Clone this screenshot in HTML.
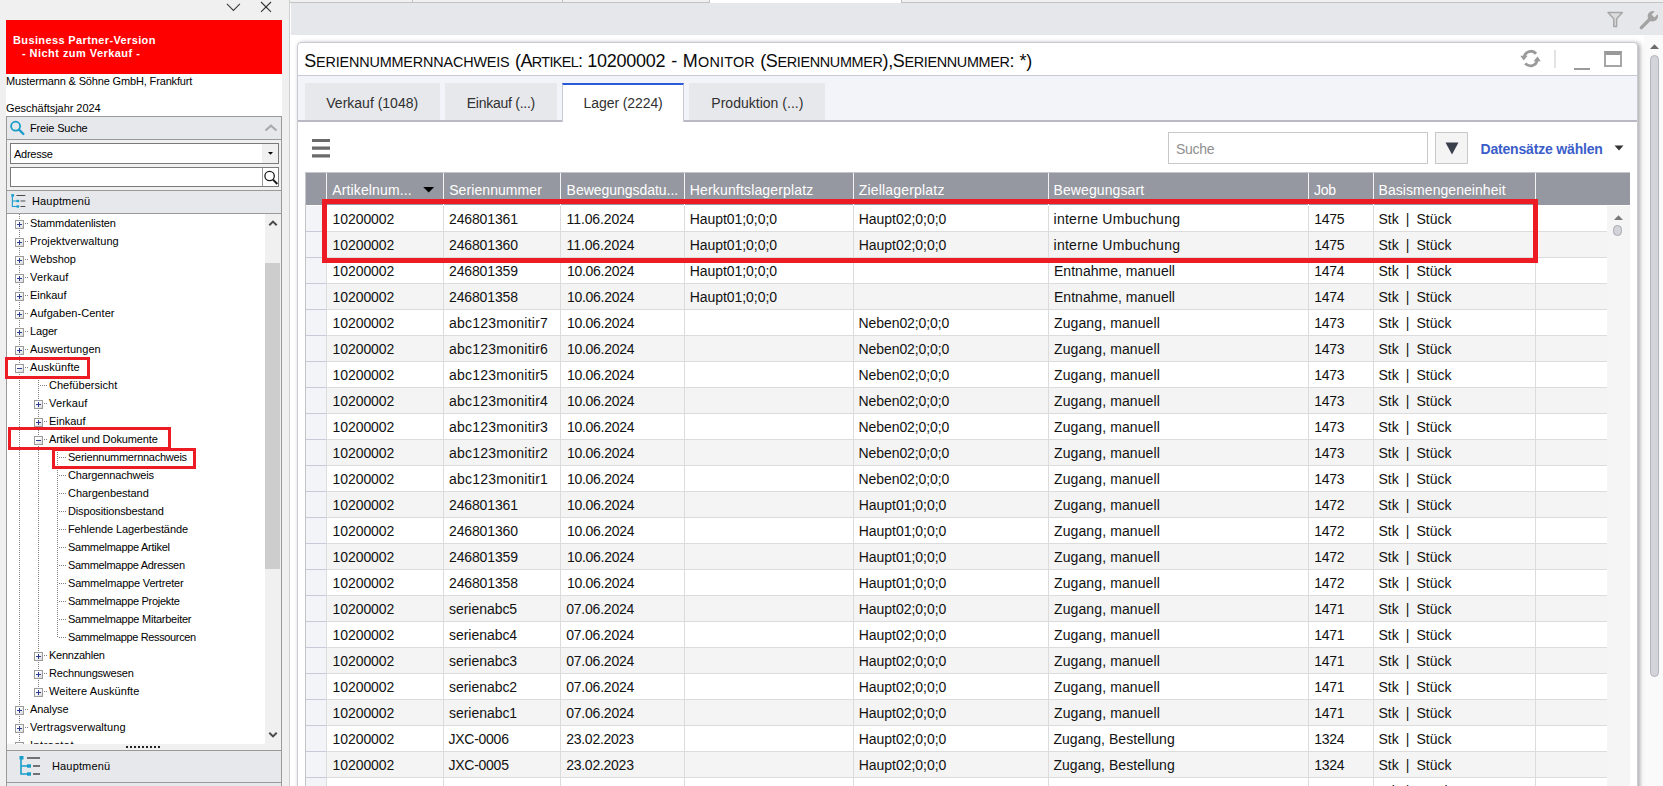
<!DOCTYPE html>
<html lang="de"><head><meta charset="utf-8"><title>Seriennummernnachweis</title>
<style>
*{box-sizing:border-box;margin:0;padding:0}
html,body{width:1663px;height:786px;overflow:hidden;background:#f0f0f0}
body{position:relative;font-family:"Liberation Sans",sans-serif;font-size:11px;color:#000}
.a{position:absolute}
.t{position:absolute;white-space:pre;line-height:18px;height:18px}
#lp{left:0;top:0;width:289px;height:786px;background:#f0f0f0}
#redbox{left:6px;top:20px;width:276px;height:54px;background:#ff0000;color:#fff}
#info{left:6px;top:74px;width:276px;height:42px;background:#fff}
.hdr{left:6px;width:276px;background:#e7e8ec;border:1px solid #9a9a9a}
#tree{left:7px;top:214px;width:258px;height:530px;background:#fff;overflow:hidden}
.bx{position:absolute;width:9px;height:9px;border:1px solid #9b9b9b;background:linear-gradient(135deg,#fff 30%,#d8d8d8)}
.bx:before{content:"";position:absolute;left:1px;top:3px;width:5px;height:1px;background:#2b3b8f}
.bx.p:after{content:"";position:absolute;left:3px;top:1px;width:1px;height:5px;background:#2b3b8f}
.vd{position:absolute;width:1px;background-image:linear-gradient(#808080 50%,transparent 50%);background-size:1px 2px}
.hd{position:absolute;height:1px;background-image:linear-gradient(90deg,#808080 50%,transparent 50%);background-size:2px 1px}
.rb{position:absolute;border:3px solid #ed1c24}
#rp{left:290px;top:0;width:1373px;height:786px;background:#fff}
#strip{left:1px;top:3px;width:1372px;height:32px;background:#e6e7ea}
#panel{left:7px;top:42px;width:1341px;height:760px;background:#fff;border:1px solid #c9cad3;border-radius:4px;box-shadow:2px 1px 5px rgba(0,0,0,.35)}
#title{left:0;top:0;width:1339px;height:33px;color:#0a0a0a}
#title .t{font-size:18px;line-height:34px;height:34px;top:1px}
#title .sc{font-size:14.4px}
#tabs{left:0;top:32px;width:1339px;height:47px;background:#f3f4f9;border-top:1px solid #c9cad3;border-bottom:2px solid #b9bac4}
.tab{position:absolute;top:7px;height:37px;background:#e7e8ec}
.tab.act{background:#fff;border-top:2px solid #2a5bd7;border-left:1px solid #c9cad3;border-right:1px solid #c9cad3;height:39px}
.tab .t{font-size:14px;color:#303030}
#grid{top:129px;width:1325px;height:700px}
.gh{position:absolute;top:1px;height:32px;border-left:1px solid #f4f4f6}
.gh .t,.c .t{font-size:14px}
.gh .t{color:#fff;top:8px}
.row{position:absolute;left:1px;height:26px;border-bottom:1px solid #dcdcdc;background:#fff}
.row.o{background:#f4f4f4}
.ri{position:absolute;left:0;top:0;width:20px;height:26px;background:#f3f4f7;border-bottom:1px solid #c9cad8}
.c{position:absolute;top:0;height:25px;border-left:1px solid #dcdcdc;color:#111}
.c .t{top:4px}
</style></head>
<body>
<div id="lp" class="a">
<svg class="a" style="left:224px;top:0" width="52" height="16" viewBox="0 0 52 16"><path d="M2.9 3.9 L9.4 10.4 L15.9 3.9" fill="none" stroke="#3c3c3c" stroke-width="1.1"/><path d="M37 2 L47 11.9 M47 2 L37 11.9" fill="none" stroke="#333" stroke-width="1.1"/></svg>
<div id="redbox" class="a"><div class="t" style="left:7px;top:11px;font-weight:700;letter-spacing:0.37px;">Business Partner-Version</div><div class="t" style="left:16px;top:24px;font-weight:700;letter-spacing:0.45px;">- Nicht zum Verkauf -</div></div>
<div id="info" class="a"><div class="t" style="left:0px;top:-2px;letter-spacing:-0.15px;">Mustermann &amp; Söhne GmbH, Frankfurt</div><div class="t" style="left:0px;top:25px;letter-spacing:-0.04px;">Geschäftsjahr 2024</div></div>
<div class="a hdr" style="top:116px;height:24px"><svg class="a" style="left:3px;top:3px" width="16" height="16" viewBox="0 0 16 16"><circle cx="5.6" cy="6.2" r="4.5" fill="none" stroke="#189dca" stroke-width="1.8"/><path d="M9 9.6 L13.4 14" stroke="#189dca" stroke-width="2.3" stroke-linecap="round"/></svg><div class="t" style="left:23px;top:2px;letter-spacing:-0.16px;">Freie Suche</div><svg class="a" style="left:257px;top:6px" width="14" height="10" viewBox="0 0 14 10"><path d="M1.5 7.5 L7 2.6 L12.5 7.5" fill="none" stroke="#a9a9a9" stroke-width="2.1"/></svg></div>
<div class="a" style="left:6px;top:140px;width:276px;height:51px;border-left:1px solid #9a9a9a;border-right:1px solid #9a9a9a;background:#f0f0f0"></div>
<div class="a" style="left:10px;top:143px;width:269px;height:21px;background:#fff;border:1px solid #7a7a7a"><div class="t" style="left:3px;top:1px;letter-spacing:-0.25px;">Adresse</div><div class="a" style="right:0;top:0;width:16px;height:19px;background:#f0f0f0"></div><svg class="a" style="left:256px;top:7px" width="7" height="5" viewBox="0 0 7 5"><path d="M1 1 H6 L3.5 3.8 Z" fill="#000"/></svg></div>
<div class="a" style="left:10px;top:167px;width:269px;height:20px;background:#fff;border:1px solid #7a7a7a"><div class="a" style="left:251px;top:0;width:1px;height:18px;background:#9a9a9a"></div><svg class="a" style="left:252px;top:1px" width="16" height="17" viewBox="0 0 16 17"><circle cx="6.6" cy="7" r="4.7" fill="none" stroke="#1a1a1a" stroke-width="1.3"/><path d="M10 10.6 L14.3 15" stroke="#1a1a1a" stroke-width="2"/></svg></div>
<div class="a hdr" style="top:190px;height:24px"><svg class="a" style="left:4px;top:3px" width="15" height="14" viewBox="0 0 22 20"><path d="M2 1 V18 H10 M2 10 H10" fill="none" stroke="#189dca" stroke-width="1.6"/><rect x="0.5" y="0" width="4" height="3.5" fill="#189dca"/><rect x="8" y="8.3" width="4" height="3.4" fill="#189dca"/><rect x="8" y="16.3" width="4" height="3.4" fill="#189dca"/><path d="M8 2 H21 M14 10 H21 M14 18 H21" stroke="#4a4a4a" stroke-width="1.6"/></svg><div class="t" style="left:25px;top:1px;letter-spacing:0.15px;">Hauptmenü</div></div>
<div class="a" style="left:6px;top:214px;width:276px;height:537px;border-left:1px solid #9a9a9a;border-right:1px solid #9a9a9a"></div>
<div id="tree" class="a">
<div class="vd" style="left:12px;top:0;height:540px"></div><div class="vd" style="left:31px;top:162px;height:315px"></div><div class="vd" style="left:50px;top:234px;height:189px"></div>
<div class="hd" style="left:18px;top:9px;width:4px"></div><div class="bx p" style="left:8px;top:6px"></div><div class="t" style="left:23px;top:0px;letter-spacing:-0.14px;">Stammdatenlisten</div>
<div class="hd" style="left:18px;top:27px;width:4px"></div><div class="bx p" style="left:8px;top:24px"></div><div class="t" style="left:23px;top:18px;letter-spacing:0.08px;">Projektverwaltung</div>
<div class="hd" style="left:18px;top:45px;width:4px"></div><div class="bx p" style="left:8px;top:42px"></div><div class="t" style="left:23px;top:36px;letter-spacing:-0.07px;">Webshop</div>
<div class="hd" style="left:18px;top:63px;width:4px"></div><div class="bx p" style="left:8px;top:60px"></div><div class="t" style="left:23px;top:54px;letter-spacing:0.18px;">Verkauf</div>
<div class="hd" style="left:18px;top:81px;width:4px"></div><div class="bx p" style="left:8px;top:78px"></div><div class="t" style="left:23px;top:72px;letter-spacing:-0.03px;">Einkauf</div>
<div class="hd" style="left:18px;top:99px;width:4px"></div><div class="bx p" style="left:8px;top:96px"></div><div class="t" style="left:23px;top:90px;letter-spacing:0.05px;">Aufgaben-Center</div>
<div class="hd" style="left:18px;top:117px;width:4px"></div><div class="bx p" style="left:8px;top:114px"></div><div class="t" style="left:23px;top:108px;letter-spacing:-0.15px;">Lager</div>
<div class="hd" style="left:18px;top:135px;width:4px"></div><div class="bx p" style="left:8px;top:132px"></div><div class="t" style="left:23px;top:126px;letter-spacing:0.03px;">Auswertungen</div>
<div class="hd" style="left:18px;top:153px;width:4px"></div><div class="bx m" style="left:8px;top:150px"></div><div class="t" style="left:23px;top:144px;letter-spacing:0.09px;">Auskünfte</div>
<div class="hd" style="left:33px;top:171px;width:8px"></div><div class="t" style="left:42px;top:162px;letter-spacing:0.03px;">Chefübersicht</div>
<div class="hd" style="left:37px;top:189px;width:4px"></div><div class="bx p" style="left:27px;top:186px"></div><div class="t" style="left:42px;top:180px;letter-spacing:0.18px;">Verkauf</div>
<div class="hd" style="left:37px;top:207px;width:4px"></div><div class="bx p" style="left:27px;top:204px"></div><div class="t" style="left:42px;top:198px;letter-spacing:-0.04px;">Einkauf</div>
<div class="hd" style="left:37px;top:225px;width:4px"></div><div class="bx m" style="left:27px;top:222px"></div><div class="t" style="left:42px;top:216px;letter-spacing:-0.12px;">Artikel und Dokumente</div>
<div class="hd" style="left:52px;top:243px;width:8px"></div><div class="t" style="left:61px;top:234px;letter-spacing:-0.25px;">Seriennummernnachweis</div>
<div class="hd" style="left:52px;top:261px;width:8px"></div><div class="t" style="left:61px;top:252px;letter-spacing:-0.14px;">Chargennachweis</div>
<div class="hd" style="left:52px;top:279px;width:8px"></div><div class="t" style="left:61px;top:270px;letter-spacing:-0.04px;">Chargenbestand</div>
<div class="hd" style="left:52px;top:297px;width:8px"></div><div class="t" style="left:61px;top:288px;letter-spacing:-0.15px;">Dispositionsbestand</div>
<div class="hd" style="left:52px;top:315px;width:8px"></div><div class="t" style="left:61px;top:306px;letter-spacing:-0.11px;">Fehlende Lagerbestände</div>
<div class="hd" style="left:52px;top:333px;width:8px"></div><div class="t" style="left:61px;top:324px;letter-spacing:-0.28px;">Sammelmappe Artikel</div>
<div class="hd" style="left:52px;top:351px;width:8px"></div><div class="t" style="left:61px;top:342px;letter-spacing:-0.31px;">Sammelmappe Adressen</div>
<div class="hd" style="left:52px;top:369px;width:8px"></div><div class="t" style="left:61px;top:360px;letter-spacing:-0.18px;">Sammelmappe Vertreter</div>
<div class="hd" style="left:52px;top:387px;width:8px"></div><div class="t" style="left:61px;top:378px;letter-spacing:-0.29px;">Sammelmappe Projekte</div>
<div class="hd" style="left:52px;top:405px;width:8px"></div><div class="t" style="left:61px;top:396px;letter-spacing:-0.25px;">Sammelmappe Mitarbeiter</div>
<div class="hd" style="left:52px;top:423px;width:8px"></div><div class="t" style="left:61px;top:414px;letter-spacing:-0.36px;">Sammelmappe Ressourcen</div>
<div class="hd" style="left:37px;top:441px;width:4px"></div><div class="bx p" style="left:27px;top:438px"></div><div class="t" style="left:42px;top:432px;letter-spacing:-0.24px;">Kennzahlen</div>
<div class="hd" style="left:37px;top:459px;width:4px"></div><div class="bx p" style="left:27px;top:456px"></div><div class="t" style="left:42px;top:450px;letter-spacing:-0.2px;">Rechnungswesen</div>
<div class="hd" style="left:37px;top:477px;width:4px"></div><div class="bx p" style="left:27px;top:474px"></div><div class="t" style="left:42px;top:468px;letter-spacing:0.08px;">Weitere Auskünfte</div>
<div class="hd" style="left:18px;top:495px;width:4px"></div><div class="bx p" style="left:8px;top:492px"></div><div class="t" style="left:23px;top:486px;letter-spacing:-0.08px;">Analyse</div>
<div class="hd" style="left:18px;top:513px;width:4px"></div><div class="bx p" style="left:8px;top:510px"></div><div class="t" style="left:23px;top:504px;letter-spacing:0.08px;">Vertragsverwaltung</div>
<div class="hd" style="left:18px;top:531px;width:4px"></div><div class="bx p" style="left:8px;top:528px"></div><div class="t" style="left:23px;top:522px;letter-spacing:0.47px;">Intrastat</div>
</div>
<div class="rb" style="left:5px;top:357px;width:85px;height:22px"></div><div class="rb" style="left:8px;top:427px;width:163px;height:23px"></div><div class="rb" style="left:52px;top:448px;width:144px;height:21px"></div>
<div class="a" style="left:265px;top:214px;width:16px;height:530px;background:#f0f0f0"><svg class="a" style="left:3px;top:5px" width="10" height="8" viewBox="0 0 10 8"><path d="M1.3 6.2 L5 2.6 L8.7 6.2" fill="none" stroke="#4a4a4a" stroke-width="2"/></svg><div class="a" style="left:0;top:49px;width:15px;height:306px;background:#cdcdcd"></div><svg class="a" style="left:3px;top:517px" width="10" height="8" viewBox="0 0 10 8"><path d="M1.3 1.8 L5 5.4 L8.7 1.8" fill="none" stroke="#4a4a4a" stroke-width="2"/></svg></div>
<div class="a" style="left:7px;top:744px;width:274px;height:6px;background:#f0f0f0"></div><div class="a" style="left:126px;top:746px;width:34px;height:2px;background-image:linear-gradient(90deg,#222 50%,transparent 50%);background-size:4px 2px"></div>
<div class="a hdr" style="top:750px;height:33px"><svg class="a" style="left:12px;top:5px" width="22" height="20" viewBox="0 0 22 20"><path d="M2 1 V18 H10 M2 10 H10" fill="none" stroke="#189dca" stroke-width="1.6"/><rect x="0.5" y="0" width="4" height="3.5" fill="#189dca"/><rect x="8" y="8.3" width="4" height="3.4" fill="#189dca"/><rect x="8" y="16.3" width="4" height="3.4" fill="#189dca"/><path d="M8 2 H21 M14 10 H21 M14 18 H21" stroke="#4a4a4a" stroke-width="1.6"/></svg><div class="t" style="left:45px;top:6px;letter-spacing:0.15px;">Hauptmenü</div></div>
<div class="a hdr" style="top:782px;height:10px"></div>
</div>
<div class="a" style="left:289px;top:0;width:1px;height:786px;background:#cfcfcf"></div>
<div id="rp" class="a">
<div class="a" style="left:0;top:0;width:1373px;height:3px;background:#f0f0f0;border-bottom:1px solid #c3c3c3"></div><div class="a" style="left:122px;top:0;width:1px;height:3px;background:#c3c3c3"></div><div class="a" style="left:272px;top:0;width:1px;height:3px;background:#c3c3c3"></div><div class="a" style="left:419px;top:0;width:1px;height:3px;background:#c3c3c3"></div><div class="a" style="left:420px;top:0;width:191px;height:3px;background:#fff"></div><div class="a" style="left:611px;top:0;width:1px;height:3px;background:#c3c3c3"></div>
<div id="strip" class="a"><svg class="a" style="left:1315px;top:5px" width="19" height="20" viewBox="0 0 19 20"><path d="M2 4.6 H16.4 L10.6 10.8 V18.4 H7.8 V10.8 Z" fill="#dcdcdf" stroke="#a6a6a6" stroke-width="1.5" stroke-linejoin="round"/></svg><svg class="a" style="left:1348px;top:7px" width="20" height="20" viewBox="0 0 20 20"><path d="M2.4 17.6 L11 9" stroke="#a3a3a3" stroke-width="3.4" stroke-linecap="round"/><path d="M18.6 4.2 L15.4 7.4 L12.6 4.6 L15.8 1.4 A5.2 5.2 0 1 0 18.6 4.2 Z" fill="#a3a3a3"/></svg></div>
<div class="a" style="left:1354px;top:35px;width:19px;height:751px;background:#fafafa"><svg class="a" style="left:6px;top:9px" width="9" height="5" viewBox="0 0 9 5"><path d="M0 5 L4.5 0.3 L9 5 Z" fill="#6c6c6c"/></svg><div class="a" style="left:6px;top:20px;width:9px;height:622px;background:#d3d3da;border:1px solid #b4b4bc;border-radius:5px"></div></div>
<div id="panel" class="a">
<div id="title" class="a"><div class="t" style="left:6.2px;letter-spacing:-0.16px">S<span class="sc">ERIENNUMMERNNACHWEIS</span></div><div class="t" style="left:217.1px;letter-spacing:-0.65px">(A<span class="sc">RTIKEL</span>:</div><div class="t" style="left:289.2px;letter-spacing:-0.24px">10200002</div><div class="t" style="left:373.2px;letter-spacing:0.2px">-</div><div class="t" style="left:384.8px;letter-spacing:0.21px">M<span class="sc">ONITOR</span></div><div class="t" style="left:462.2px;letter-spacing:-0.34px">(S<span class="sc">ERIENNUMMER</span>),S<span class="sc">ERIENNUMMER</span>:</div><div class="t" style="left:721.5px;letter-spacing:-0.2px">*)</div></div>
<svg class="a" style="left:1222px;top:4.5px" width="22" height="22" viewBox="0.3 0.3 20.4 20.4"><g fill="none" stroke="#9a9a9a" stroke-width="2.7"><path d="M15.2 5.6 A6.3 6.3 0 0 0 4.2 8.6"/><path d="M5.2 14.6 A6.3 6.3 0 0 0 16.2 11.6"/></g><path d="M0.6 7.6 H7.4 L3.6 12 Z" fill="#9a9a9a"/><path d="M12.8 12.6 H19.6 L16.6 8.2 Z" fill="#9a9a9a"/></svg><div class="a" style="left:1256px;top:7px;width:2px;height:18px;background:#e3e3e3"></div><div class="a" style="left:1276px;top:25px;width:16px;height:2px;background:#9a9a9a"></div><div class="a" style="left:1306px;top:8px;width:18px;height:16px;border:2px solid #a6a6a6;border-top:4px solid #999"></div>
<div id="tabs" class="a"><div class="tab" style="left:7px;width:135px"><div class="t" style="left:21.3px;top:11px;font-size:14px;letter-spacing:-0.0px;">Verkauf (1048)</div></div><div class="tab" style="left:147px;width:112px"><div class="t" style="left:21.7px;top:11px;font-size:14px;letter-spacing:-0.25px;">Einkauf (...)</div></div><div class="tab act" style="left:264px;width:122px"><div class="t" style="left:20.6px;top:9px;font-size:14px;letter-spacing:-0.09px;">Lager (2224)</div></div><div class="tab" style="left:391px;width:136px"><div class="t" style="left:22.3px;top:11px;font-size:14px;letter-spacing:0.02px;">Produktion (...)</div></div></div>
<svg class="a" style="left:14px;top:95px" width="18" height="20" viewBox="0 0 18 20"><path d="M0 1 H18 V4 H0 Z M0 8.5 H18 V11.7 H0 Z M0 16.3 H18 V19.5 H0 Z" fill="#6b6b6b"/></svg>
<div class="a" style="left:870px;top:89px;width:260px;height:32px;border:1px solid #c8c8c8;background:#fff"><div class="t" style="left:7px;top:7px;font-size:14px;letter-spacing:-0.3px;color:#8f8f8f;">Suche</div></div><div class="a" style="left:1137px;top:89px;width:33px;height:32px;border:1px solid #c8c8c8;background:#f4f4f4"><svg class="a" style="left:9px;top:9px" width="14" height="13" viewBox="0 0 14 13"><path d="M0.5 0.5 H13.5 L7 12.5 Z" fill="#3a3f4c"/></svg></div><div class="t" style="left:1182.5px;top:97px;font-size:14px;font-weight:700;letter-spacing:-0.18px;color:#3a5dc9;">Datensätze wählen</div><svg class="a" style="left:1316px;top:102px" width="10" height="6" viewBox="0 0 10 6"><path d="M0.5 0.5 H9.5 L5 5.5 Z" fill="#333"/></svg>
<div id="grid" class="a" style="left:7px">
<div class="a" style="left:0;top:0;width:1325px;height:33px;background:#9598a1;border-top:1px solid #c6c7cc;border-left:1px solid #c6c7cc"></div><div class="gh" style="left:1px;width:20px;border-left:0;"></div><div class="gh" style="left:21px;width:117px;"><div class="t" style="left:5.3px;top:8px;font-size:14px;letter-spacing:0.13px;">Artikelnum...</div></div><div class="gh" style="left:138px;width:117px;"><div class="t" style="left:5.2px;top:8px;font-size:14px;letter-spacing:0.08px;">Seriennummer</div></div><div class="gh" style="left:255px;width:124px;"><div class="t" style="left:5.6px;top:8px;font-size:14px;letter-spacing:-0.03px;">Bewegungsdatu...</div></div><div class="gh" style="left:379px;width:169px;"><div class="t" style="left:4.7px;top:8px;font-size:14px;letter-spacing:0.17px;">Herkunftslagerplatz</div></div><div class="gh" style="left:548px;width:195px;"><div class="t" style="left:4.8px;top:8px;font-size:14px;letter-spacing:0.18px;">Ziellagerplatz</div></div><div class="gh" style="left:743px;width:260px;"><div class="t" style="left:4.5px;top:8px;font-size:14px;letter-spacing:0.1px;">Bewegungsart</div></div><div class="gh" style="left:1003px;width:65px;"><div class="t" style="left:5.0px;top:8px;font-size:14px;letter-spacing:-0.33px;">Job</div></div><div class="gh" style="left:1068px;width:162px;"><div class="t" style="left:4.6px;top:8px;font-size:14px;letter-spacing:0.05px;">Basismengeneinheit</div></div><div class="gh" style="left:1230px;width:95px;"></div><svg class="a" style="left:118px;top:15px" width="12" height="6" viewBox="0 0 12 6"><path d="M0.2 0 H11.2 L5.7 5.6 Z" fill="#000"/></svg>
<div class="row" style="top:34px;width:1301px"><div class="ri"></div><div class="c" style="left:20px;width:117px"><div class="t" style="left:5.6px;top:4px;font-size:14px;letter-spacing:-0.09px;">10200002</div></div><div class="c" style="left:137px;width:117px"><div class="t" style="left:5.0px;top:4px;font-size:14px;letter-spacing:-0.14px;">246801361</div></div><div class="c" style="left:254px;width:124px"><div class="t" style="left:5.6px;top:4px;font-size:14px;letter-spacing:-0.12px;">11.06.2024</div></div><div class="c" style="left:378px;width:169px"><div class="t" style="left:4.7px;top:4px;font-size:14px;letter-spacing:-0.05px;">Haupt01;0;0;0</div></div><div class="c" style="left:547px;width:195px"><div class="t" style="left:4.8px;top:4px;font-size:14px;letter-spacing:-0.04px;">Haupt02;0;0;0</div></div><div class="c" style="left:742px;width:260px"><div class="t" style="left:4.5px;top:4px;font-size:14px;letter-spacing:0.27px;">interne Umbuchung</div></div><div class="c" style="left:1002px;width:65px"><div class="t" style="left:5.3px;top:4px;font-size:14px;letter-spacing:-0.34px;">1475</div></div><div class="c" style="left:1067px;width:162px"><div class="t" style="left:4.5px;top:4px;font-size:14px;word-spacing:3.16px;">Stk | Stück</div></div><div class="c" style="left:1229px;width:95px"></div></div>
<div class="row o" style="top:60px;width:1301px"><div class="ri"></div><div class="c" style="left:20px;width:117px"><div class="t" style="left:5.6px;top:4px;font-size:14px;letter-spacing:-0.09px;">10200002</div></div><div class="c" style="left:137px;width:117px"><div class="t" style="left:5.0px;top:4px;font-size:14px;letter-spacing:-0.14px;">246801360</div></div><div class="c" style="left:254px;width:124px"><div class="t" style="left:5.6px;top:4px;font-size:14px;letter-spacing:-0.12px;">11.06.2024</div></div><div class="c" style="left:378px;width:169px"><div class="t" style="left:4.7px;top:4px;font-size:14px;letter-spacing:-0.05px;">Haupt01;0;0;0</div></div><div class="c" style="left:547px;width:195px"><div class="t" style="left:4.8px;top:4px;font-size:14px;letter-spacing:-0.04px;">Haupt02;0;0;0</div></div><div class="c" style="left:742px;width:260px"><div class="t" style="left:4.5px;top:4px;font-size:14px;letter-spacing:0.27px;">interne Umbuchung</div></div><div class="c" style="left:1002px;width:65px"><div class="t" style="left:5.3px;top:4px;font-size:14px;letter-spacing:-0.34px;">1475</div></div><div class="c" style="left:1067px;width:162px"><div class="t" style="left:4.5px;top:4px;font-size:14px;word-spacing:3.16px;">Stk | Stück</div></div><div class="c" style="left:1229px;width:95px"></div></div>
<div class="row" style="top:86px;width:1301px"><div class="ri"></div><div class="c" style="left:20px;width:117px"><div class="t" style="left:5.6px;top:4px;font-size:14px;letter-spacing:-0.09px;">10200002</div></div><div class="c" style="left:137px;width:117px"><div class="t" style="left:5.0px;top:4px;font-size:14px;letter-spacing:-0.14px;">246801359</div></div><div class="c" style="left:254px;width:124px"><div class="t" style="left:5.9px;top:4px;font-size:14px;letter-spacing:-0.28px;">10.06.2024</div></div><div class="c" style="left:378px;width:169px"><div class="t" style="left:4.7px;top:4px;font-size:14px;letter-spacing:-0.05px;">Haupt01;0;0;0</div></div><div class="c" style="left:547px;width:195px"></div><div class="c" style="left:742px;width:260px"><div class="t" style="left:5.0px;top:4px;font-size:14px;letter-spacing:0.02px;">Entnahme, manuell</div></div><div class="c" style="left:1002px;width:65px"><div class="t" style="left:5.3px;top:4px;font-size:14px;letter-spacing:-0.34px;">1474</div></div><div class="c" style="left:1067px;width:162px"><div class="t" style="left:4.5px;top:4px;font-size:14px;word-spacing:3.16px;">Stk | Stück</div></div><div class="c" style="left:1229px;width:95px"></div></div>
<div class="row o" style="top:112px;width:1301px"><div class="ri"></div><div class="c" style="left:20px;width:117px"><div class="t" style="left:5.6px;top:4px;font-size:14px;letter-spacing:-0.09px;">10200002</div></div><div class="c" style="left:137px;width:117px"><div class="t" style="left:5.0px;top:4px;font-size:14px;letter-spacing:-0.14px;">246801358</div></div><div class="c" style="left:254px;width:124px"><div class="t" style="left:5.9px;top:4px;font-size:14px;letter-spacing:-0.28px;">10.06.2024</div></div><div class="c" style="left:378px;width:169px"><div class="t" style="left:4.7px;top:4px;font-size:14px;letter-spacing:-0.05px;">Haupt01;0;0;0</div></div><div class="c" style="left:547px;width:195px"></div><div class="c" style="left:742px;width:260px"><div class="t" style="left:5.0px;top:4px;font-size:14px;letter-spacing:0.02px;">Entnahme, manuell</div></div><div class="c" style="left:1002px;width:65px"><div class="t" style="left:5.3px;top:4px;font-size:14px;letter-spacing:-0.34px;">1474</div></div><div class="c" style="left:1067px;width:162px"><div class="t" style="left:4.5px;top:4px;font-size:14px;word-spacing:3.16px;">Stk | Stück</div></div><div class="c" style="left:1229px;width:95px"></div></div>
<div class="row" style="top:138px;width:1301px"><div class="ri"></div><div class="c" style="left:20px;width:117px"><div class="t" style="left:5.6px;top:4px;font-size:14px;letter-spacing:-0.09px;">10200002</div></div><div class="c" style="left:137px;width:117px"><div class="t" style="left:5.0px;top:4px;font-size:14px;letter-spacing:0.24px;">abc123monitir7</div></div><div class="c" style="left:254px;width:124px"><div class="t" style="left:5.9px;top:4px;font-size:14px;letter-spacing:-0.28px;">10.06.2024</div></div><div class="c" style="left:378px;width:169px"></div><div class="c" style="left:547px;width:195px"><div class="t" style="left:4.6px;top:4px;font-size:14px;letter-spacing:-0.09px;">Neben02;0;0;0</div></div><div class="c" style="left:742px;width:260px"><div class="t" style="left:5.0px;top:4px;font-size:14px;letter-spacing:0.11px;">Zugang, manuell</div></div><div class="c" style="left:1002px;width:65px"><div class="t" style="left:5.3px;top:4px;font-size:14px;letter-spacing:-0.34px;">1473</div></div><div class="c" style="left:1067px;width:162px"><div class="t" style="left:4.5px;top:4px;font-size:14px;word-spacing:3.16px;">Stk | Stück</div></div><div class="c" style="left:1229px;width:95px"></div></div>
<div class="row o" style="top:164px;width:1301px"><div class="ri"></div><div class="c" style="left:20px;width:117px"><div class="t" style="left:5.6px;top:4px;font-size:14px;letter-spacing:-0.09px;">10200002</div></div><div class="c" style="left:137px;width:117px"><div class="t" style="left:5.0px;top:4px;font-size:14px;letter-spacing:0.24px;">abc123monitir6</div></div><div class="c" style="left:254px;width:124px"><div class="t" style="left:5.9px;top:4px;font-size:14px;letter-spacing:-0.28px;">10.06.2024</div></div><div class="c" style="left:378px;width:169px"></div><div class="c" style="left:547px;width:195px"><div class="t" style="left:4.6px;top:4px;font-size:14px;letter-spacing:-0.09px;">Neben02;0;0;0</div></div><div class="c" style="left:742px;width:260px"><div class="t" style="left:5.0px;top:4px;font-size:14px;letter-spacing:0.11px;">Zugang, manuell</div></div><div class="c" style="left:1002px;width:65px"><div class="t" style="left:5.3px;top:4px;font-size:14px;letter-spacing:-0.34px;">1473</div></div><div class="c" style="left:1067px;width:162px"><div class="t" style="left:4.5px;top:4px;font-size:14px;word-spacing:3.16px;">Stk | Stück</div></div><div class="c" style="left:1229px;width:95px"></div></div>
<div class="row" style="top:190px;width:1301px"><div class="ri"></div><div class="c" style="left:20px;width:117px"><div class="t" style="left:5.6px;top:4px;font-size:14px;letter-spacing:-0.09px;">10200002</div></div><div class="c" style="left:137px;width:117px"><div class="t" style="left:5.0px;top:4px;font-size:14px;letter-spacing:0.24px;">abc123monitir5</div></div><div class="c" style="left:254px;width:124px"><div class="t" style="left:5.9px;top:4px;font-size:14px;letter-spacing:-0.28px;">10.06.2024</div></div><div class="c" style="left:378px;width:169px"></div><div class="c" style="left:547px;width:195px"><div class="t" style="left:4.6px;top:4px;font-size:14px;letter-spacing:-0.09px;">Neben02;0;0;0</div></div><div class="c" style="left:742px;width:260px"><div class="t" style="left:5.0px;top:4px;font-size:14px;letter-spacing:0.11px;">Zugang, manuell</div></div><div class="c" style="left:1002px;width:65px"><div class="t" style="left:5.3px;top:4px;font-size:14px;letter-spacing:-0.34px;">1473</div></div><div class="c" style="left:1067px;width:162px"><div class="t" style="left:4.5px;top:4px;font-size:14px;word-spacing:3.16px;">Stk | Stück</div></div><div class="c" style="left:1229px;width:95px"></div></div>
<div class="row o" style="top:216px;width:1301px"><div class="ri"></div><div class="c" style="left:20px;width:117px"><div class="t" style="left:5.6px;top:4px;font-size:14px;letter-spacing:-0.09px;">10200002</div></div><div class="c" style="left:137px;width:117px"><div class="t" style="left:5.0px;top:4px;font-size:14px;letter-spacing:0.24px;">abc123monitir4</div></div><div class="c" style="left:254px;width:124px"><div class="t" style="left:5.9px;top:4px;font-size:14px;letter-spacing:-0.28px;">10.06.2024</div></div><div class="c" style="left:378px;width:169px"></div><div class="c" style="left:547px;width:195px"><div class="t" style="left:4.6px;top:4px;font-size:14px;letter-spacing:-0.09px;">Neben02;0;0;0</div></div><div class="c" style="left:742px;width:260px"><div class="t" style="left:5.0px;top:4px;font-size:14px;letter-spacing:0.11px;">Zugang, manuell</div></div><div class="c" style="left:1002px;width:65px"><div class="t" style="left:5.3px;top:4px;font-size:14px;letter-spacing:-0.34px;">1473</div></div><div class="c" style="left:1067px;width:162px"><div class="t" style="left:4.5px;top:4px;font-size:14px;word-spacing:3.16px;">Stk | Stück</div></div><div class="c" style="left:1229px;width:95px"></div></div>
<div class="row" style="top:242px;width:1301px"><div class="ri"></div><div class="c" style="left:20px;width:117px"><div class="t" style="left:5.6px;top:4px;font-size:14px;letter-spacing:-0.09px;">10200002</div></div><div class="c" style="left:137px;width:117px"><div class="t" style="left:5.0px;top:4px;font-size:14px;letter-spacing:0.24px;">abc123monitir3</div></div><div class="c" style="left:254px;width:124px"><div class="t" style="left:5.9px;top:4px;font-size:14px;letter-spacing:-0.28px;">10.06.2024</div></div><div class="c" style="left:378px;width:169px"></div><div class="c" style="left:547px;width:195px"><div class="t" style="left:4.6px;top:4px;font-size:14px;letter-spacing:-0.09px;">Neben02;0;0;0</div></div><div class="c" style="left:742px;width:260px"><div class="t" style="left:5.0px;top:4px;font-size:14px;letter-spacing:0.11px;">Zugang, manuell</div></div><div class="c" style="left:1002px;width:65px"><div class="t" style="left:5.3px;top:4px;font-size:14px;letter-spacing:-0.34px;">1473</div></div><div class="c" style="left:1067px;width:162px"><div class="t" style="left:4.5px;top:4px;font-size:14px;word-spacing:3.16px;">Stk | Stück</div></div><div class="c" style="left:1229px;width:95px"></div></div>
<div class="row o" style="top:268px;width:1301px"><div class="ri"></div><div class="c" style="left:20px;width:117px"><div class="t" style="left:5.6px;top:4px;font-size:14px;letter-spacing:-0.09px;">10200002</div></div><div class="c" style="left:137px;width:117px"><div class="t" style="left:5.0px;top:4px;font-size:14px;letter-spacing:0.24px;">abc123monitir2</div></div><div class="c" style="left:254px;width:124px"><div class="t" style="left:5.9px;top:4px;font-size:14px;letter-spacing:-0.28px;">10.06.2024</div></div><div class="c" style="left:378px;width:169px"></div><div class="c" style="left:547px;width:195px"><div class="t" style="left:4.6px;top:4px;font-size:14px;letter-spacing:-0.09px;">Neben02;0;0;0</div></div><div class="c" style="left:742px;width:260px"><div class="t" style="left:5.0px;top:4px;font-size:14px;letter-spacing:0.11px;">Zugang, manuell</div></div><div class="c" style="left:1002px;width:65px"><div class="t" style="left:5.3px;top:4px;font-size:14px;letter-spacing:-0.34px;">1473</div></div><div class="c" style="left:1067px;width:162px"><div class="t" style="left:4.5px;top:4px;font-size:14px;word-spacing:3.16px;">Stk | Stück</div></div><div class="c" style="left:1229px;width:95px"></div></div>
<div class="row" style="top:294px;width:1301px"><div class="ri"></div><div class="c" style="left:20px;width:117px"><div class="t" style="left:5.6px;top:4px;font-size:14px;letter-spacing:-0.09px;">10200002</div></div><div class="c" style="left:137px;width:117px"><div class="t" style="left:5.0px;top:4px;font-size:14px;letter-spacing:0.24px;">abc123monitir1</div></div><div class="c" style="left:254px;width:124px"><div class="t" style="left:5.9px;top:4px;font-size:14px;letter-spacing:-0.28px;">10.06.2024</div></div><div class="c" style="left:378px;width:169px"></div><div class="c" style="left:547px;width:195px"><div class="t" style="left:4.6px;top:4px;font-size:14px;letter-spacing:-0.09px;">Neben02;0;0;0</div></div><div class="c" style="left:742px;width:260px"><div class="t" style="left:5.0px;top:4px;font-size:14px;letter-spacing:0.11px;">Zugang, manuell</div></div><div class="c" style="left:1002px;width:65px"><div class="t" style="left:5.3px;top:4px;font-size:14px;letter-spacing:-0.34px;">1473</div></div><div class="c" style="left:1067px;width:162px"><div class="t" style="left:4.5px;top:4px;font-size:14px;word-spacing:3.16px;">Stk | Stück</div></div><div class="c" style="left:1229px;width:95px"></div></div>
<div class="row o" style="top:320px;width:1301px"><div class="ri"></div><div class="c" style="left:20px;width:117px"><div class="t" style="left:5.6px;top:4px;font-size:14px;letter-spacing:-0.09px;">10200002</div></div><div class="c" style="left:137px;width:117px"><div class="t" style="left:5.0px;top:4px;font-size:14px;letter-spacing:-0.14px;">246801361</div></div><div class="c" style="left:254px;width:124px"><div class="t" style="left:5.9px;top:4px;font-size:14px;letter-spacing:-0.28px;">10.06.2024</div></div><div class="c" style="left:378px;width:169px"></div><div class="c" style="left:547px;width:195px"><div class="t" style="left:4.8px;top:4px;font-size:14px;letter-spacing:-0.04px;">Haupt01;0;0;0</div></div><div class="c" style="left:742px;width:260px"><div class="t" style="left:5.0px;top:4px;font-size:14px;letter-spacing:0.11px;">Zugang, manuell</div></div><div class="c" style="left:1002px;width:65px"><div class="t" style="left:5.3px;top:4px;font-size:14px;letter-spacing:-0.34px;">1472</div></div><div class="c" style="left:1067px;width:162px"><div class="t" style="left:4.5px;top:4px;font-size:14px;word-spacing:3.16px;">Stk | Stück</div></div><div class="c" style="left:1229px;width:95px"></div></div>
<div class="row" style="top:346px;width:1301px"><div class="ri"></div><div class="c" style="left:20px;width:117px"><div class="t" style="left:5.6px;top:4px;font-size:14px;letter-spacing:-0.09px;">10200002</div></div><div class="c" style="left:137px;width:117px"><div class="t" style="left:5.0px;top:4px;font-size:14px;letter-spacing:-0.14px;">246801360</div></div><div class="c" style="left:254px;width:124px"><div class="t" style="left:5.9px;top:4px;font-size:14px;letter-spacing:-0.28px;">10.06.2024</div></div><div class="c" style="left:378px;width:169px"></div><div class="c" style="left:547px;width:195px"><div class="t" style="left:4.8px;top:4px;font-size:14px;letter-spacing:-0.04px;">Haupt01;0;0;0</div></div><div class="c" style="left:742px;width:260px"><div class="t" style="left:5.0px;top:4px;font-size:14px;letter-spacing:0.11px;">Zugang, manuell</div></div><div class="c" style="left:1002px;width:65px"><div class="t" style="left:5.3px;top:4px;font-size:14px;letter-spacing:-0.34px;">1472</div></div><div class="c" style="left:1067px;width:162px"><div class="t" style="left:4.5px;top:4px;font-size:14px;word-spacing:3.16px;">Stk | Stück</div></div><div class="c" style="left:1229px;width:95px"></div></div>
<div class="row o" style="top:372px;width:1301px"><div class="ri"></div><div class="c" style="left:20px;width:117px"><div class="t" style="left:5.6px;top:4px;font-size:14px;letter-spacing:-0.09px;">10200002</div></div><div class="c" style="left:137px;width:117px"><div class="t" style="left:5.0px;top:4px;font-size:14px;letter-spacing:-0.14px;">246801359</div></div><div class="c" style="left:254px;width:124px"><div class="t" style="left:5.9px;top:4px;font-size:14px;letter-spacing:-0.28px;">10.06.2024</div></div><div class="c" style="left:378px;width:169px"></div><div class="c" style="left:547px;width:195px"><div class="t" style="left:4.8px;top:4px;font-size:14px;letter-spacing:-0.04px;">Haupt01;0;0;0</div></div><div class="c" style="left:742px;width:260px"><div class="t" style="left:5.0px;top:4px;font-size:14px;letter-spacing:0.11px;">Zugang, manuell</div></div><div class="c" style="left:1002px;width:65px"><div class="t" style="left:5.3px;top:4px;font-size:14px;letter-spacing:-0.34px;">1472</div></div><div class="c" style="left:1067px;width:162px"><div class="t" style="left:4.5px;top:4px;font-size:14px;word-spacing:3.16px;">Stk | Stück</div></div><div class="c" style="left:1229px;width:95px"></div></div>
<div class="row" style="top:398px;width:1301px"><div class="ri"></div><div class="c" style="left:20px;width:117px"><div class="t" style="left:5.6px;top:4px;font-size:14px;letter-spacing:-0.09px;">10200002</div></div><div class="c" style="left:137px;width:117px"><div class="t" style="left:5.0px;top:4px;font-size:14px;letter-spacing:-0.14px;">246801358</div></div><div class="c" style="left:254px;width:124px"><div class="t" style="left:5.9px;top:4px;font-size:14px;letter-spacing:-0.28px;">10.06.2024</div></div><div class="c" style="left:378px;width:169px"></div><div class="c" style="left:547px;width:195px"><div class="t" style="left:4.8px;top:4px;font-size:14px;letter-spacing:-0.04px;">Haupt01;0;0;0</div></div><div class="c" style="left:742px;width:260px"><div class="t" style="left:5.0px;top:4px;font-size:14px;letter-spacing:0.11px;">Zugang, manuell</div></div><div class="c" style="left:1002px;width:65px"><div class="t" style="left:5.3px;top:4px;font-size:14px;letter-spacing:-0.34px;">1472</div></div><div class="c" style="left:1067px;width:162px"><div class="t" style="left:4.5px;top:4px;font-size:14px;word-spacing:3.16px;">Stk | Stück</div></div><div class="c" style="left:1229px;width:95px"></div></div>
<div class="row o" style="top:424px;width:1301px"><div class="ri"></div><div class="c" style="left:20px;width:117px"><div class="t" style="left:5.6px;top:4px;font-size:14px;letter-spacing:-0.09px;">10200002</div></div><div class="c" style="left:137px;width:117px"><div class="t" style="left:5.0px;top:4px;font-size:14px;letter-spacing:-0.04px;">serienabc5</div></div><div class="c" style="left:254px;width:124px"><div class="t" style="left:5.2px;top:4px;font-size:14px;letter-spacing:-0.21px;">07.06.2024</div></div><div class="c" style="left:378px;width:169px"></div><div class="c" style="left:547px;width:195px"><div class="t" style="left:4.8px;top:4px;font-size:14px;letter-spacing:-0.04px;">Haupt02;0;0;0</div></div><div class="c" style="left:742px;width:260px"><div class="t" style="left:5.0px;top:4px;font-size:14px;letter-spacing:0.11px;">Zugang, manuell</div></div><div class="c" style="left:1002px;width:65px"><div class="t" style="left:5.3px;top:4px;font-size:14px;letter-spacing:-0.34px;">1471</div></div><div class="c" style="left:1067px;width:162px"><div class="t" style="left:4.5px;top:4px;font-size:14px;word-spacing:3.16px;">Stk | Stück</div></div><div class="c" style="left:1229px;width:95px"></div></div>
<div class="row" style="top:450px;width:1301px"><div class="ri"></div><div class="c" style="left:20px;width:117px"><div class="t" style="left:5.6px;top:4px;font-size:14px;letter-spacing:-0.09px;">10200002</div></div><div class="c" style="left:137px;width:117px"><div class="t" style="left:5.0px;top:4px;font-size:14px;letter-spacing:-0.04px;">serienabc4</div></div><div class="c" style="left:254px;width:124px"><div class="t" style="left:5.2px;top:4px;font-size:14px;letter-spacing:-0.21px;">07.06.2024</div></div><div class="c" style="left:378px;width:169px"></div><div class="c" style="left:547px;width:195px"><div class="t" style="left:4.8px;top:4px;font-size:14px;letter-spacing:-0.04px;">Haupt02;0;0;0</div></div><div class="c" style="left:742px;width:260px"><div class="t" style="left:5.0px;top:4px;font-size:14px;letter-spacing:0.11px;">Zugang, manuell</div></div><div class="c" style="left:1002px;width:65px"><div class="t" style="left:5.3px;top:4px;font-size:14px;letter-spacing:-0.34px;">1471</div></div><div class="c" style="left:1067px;width:162px"><div class="t" style="left:4.5px;top:4px;font-size:14px;word-spacing:3.16px;">Stk | Stück</div></div><div class="c" style="left:1229px;width:95px"></div></div>
<div class="row o" style="top:476px;width:1301px"><div class="ri"></div><div class="c" style="left:20px;width:117px"><div class="t" style="left:5.6px;top:4px;font-size:14px;letter-spacing:-0.09px;">10200002</div></div><div class="c" style="left:137px;width:117px"><div class="t" style="left:5.0px;top:4px;font-size:14px;letter-spacing:-0.04px;">serienabc3</div></div><div class="c" style="left:254px;width:124px"><div class="t" style="left:5.2px;top:4px;font-size:14px;letter-spacing:-0.21px;">07.06.2024</div></div><div class="c" style="left:378px;width:169px"></div><div class="c" style="left:547px;width:195px"><div class="t" style="left:4.8px;top:4px;font-size:14px;letter-spacing:-0.04px;">Haupt02;0;0;0</div></div><div class="c" style="left:742px;width:260px"><div class="t" style="left:5.0px;top:4px;font-size:14px;letter-spacing:0.11px;">Zugang, manuell</div></div><div class="c" style="left:1002px;width:65px"><div class="t" style="left:5.3px;top:4px;font-size:14px;letter-spacing:-0.34px;">1471</div></div><div class="c" style="left:1067px;width:162px"><div class="t" style="left:4.5px;top:4px;font-size:14px;word-spacing:3.16px;">Stk | Stück</div></div><div class="c" style="left:1229px;width:95px"></div></div>
<div class="row" style="top:502px;width:1301px"><div class="ri"></div><div class="c" style="left:20px;width:117px"><div class="t" style="left:5.6px;top:4px;font-size:14px;letter-spacing:-0.09px;">10200002</div></div><div class="c" style="left:137px;width:117px"><div class="t" style="left:5.0px;top:4px;font-size:14px;letter-spacing:-0.04px;">serienabc2</div></div><div class="c" style="left:254px;width:124px"><div class="t" style="left:5.2px;top:4px;font-size:14px;letter-spacing:-0.21px;">07.06.2024</div></div><div class="c" style="left:378px;width:169px"></div><div class="c" style="left:547px;width:195px"><div class="t" style="left:4.8px;top:4px;font-size:14px;letter-spacing:-0.04px;">Haupt02;0;0;0</div></div><div class="c" style="left:742px;width:260px"><div class="t" style="left:5.0px;top:4px;font-size:14px;letter-spacing:0.11px;">Zugang, manuell</div></div><div class="c" style="left:1002px;width:65px"><div class="t" style="left:5.3px;top:4px;font-size:14px;letter-spacing:-0.34px;">1471</div></div><div class="c" style="left:1067px;width:162px"><div class="t" style="left:4.5px;top:4px;font-size:14px;word-spacing:3.16px;">Stk | Stück</div></div><div class="c" style="left:1229px;width:95px"></div></div>
<div class="row o" style="top:528px;width:1301px"><div class="ri"></div><div class="c" style="left:20px;width:117px"><div class="t" style="left:5.6px;top:4px;font-size:14px;letter-spacing:-0.09px;">10200002</div></div><div class="c" style="left:137px;width:117px"><div class="t" style="left:5.0px;top:4px;font-size:14px;letter-spacing:-0.04px;">serienabc1</div></div><div class="c" style="left:254px;width:124px"><div class="t" style="left:5.2px;top:4px;font-size:14px;letter-spacing:-0.21px;">07.06.2024</div></div><div class="c" style="left:378px;width:169px"></div><div class="c" style="left:547px;width:195px"><div class="t" style="left:4.8px;top:4px;font-size:14px;letter-spacing:-0.04px;">Haupt02;0;0;0</div></div><div class="c" style="left:742px;width:260px"><div class="t" style="left:5.0px;top:4px;font-size:14px;letter-spacing:0.11px;">Zugang, manuell</div></div><div class="c" style="left:1002px;width:65px"><div class="t" style="left:5.3px;top:4px;font-size:14px;letter-spacing:-0.34px;">1471</div></div><div class="c" style="left:1067px;width:162px"><div class="t" style="left:4.5px;top:4px;font-size:14px;word-spacing:3.16px;">Stk | Stück</div></div><div class="c" style="left:1229px;width:95px"></div></div>
<div class="row" style="top:554px;width:1301px"><div class="ri"></div><div class="c" style="left:20px;width:117px"><div class="t" style="left:5.6px;top:4px;font-size:14px;letter-spacing:-0.09px;">10200002</div></div><div class="c" style="left:137px;width:117px"><div class="t" style="left:4.5px;top:4px;font-size:14px;letter-spacing:-0.26px;">JXC-0006</div></div><div class="c" style="left:254px;width:124px"><div class="t" style="left:5.2px;top:4px;font-size:14px;letter-spacing:-0.26px;">23.02.2023</div></div><div class="c" style="left:378px;width:169px"></div><div class="c" style="left:547px;width:195px"><div class="t" style="left:4.8px;top:4px;font-size:14px;letter-spacing:-0.04px;">Haupt02;0;0;0</div></div><div class="c" style="left:742px;width:260px"><div class="t" style="left:4.4px;top:4px;font-size:14px;letter-spacing:0.04px;">Zugang, Bestellung</div></div><div class="c" style="left:1002px;width:65px"><div class="t" style="left:5.3px;top:4px;font-size:14px;letter-spacing:-0.34px;">1324</div></div><div class="c" style="left:1067px;width:162px"><div class="t" style="left:4.5px;top:4px;font-size:14px;word-spacing:3.16px;">Stk | Stück</div></div><div class="c" style="left:1229px;width:95px"></div></div>
<div class="row o" style="top:580px;width:1301px"><div class="ri"></div><div class="c" style="left:20px;width:117px"><div class="t" style="left:5.6px;top:4px;font-size:14px;letter-spacing:-0.09px;">10200002</div></div><div class="c" style="left:137px;width:117px"><div class="t" style="left:4.5px;top:4px;font-size:14px;letter-spacing:-0.26px;">JXC-0005</div></div><div class="c" style="left:254px;width:124px"><div class="t" style="left:5.2px;top:4px;font-size:14px;letter-spacing:-0.26px;">23.02.2023</div></div><div class="c" style="left:378px;width:169px"></div><div class="c" style="left:547px;width:195px"><div class="t" style="left:4.8px;top:4px;font-size:14px;letter-spacing:-0.04px;">Haupt02;0;0;0</div></div><div class="c" style="left:742px;width:260px"><div class="t" style="left:4.4px;top:4px;font-size:14px;letter-spacing:0.04px;">Zugang, Bestellung</div></div><div class="c" style="left:1002px;width:65px"><div class="t" style="left:5.3px;top:4px;font-size:14px;letter-spacing:-0.34px;">1324</div></div><div class="c" style="left:1067px;width:162px"><div class="t" style="left:4.5px;top:4px;font-size:14px;word-spacing:3.16px;">Stk | Stück</div></div><div class="c" style="left:1229px;width:95px"></div></div>
<div class="row" style="top:606px;width:1301px"><div class="ri"></div><div class="c" style="left:20px;width:117px"></div><div class="c" style="left:137px;width:117px"></div><div class="c" style="left:254px;width:124px"></div><div class="c" style="left:378px;width:169px"></div><div class="c" style="left:547px;width:195px"></div><div class="c" style="left:742px;width:260px"></div><div class="c" style="left:1002px;width:65px"></div><div class="c" style="left:1067px;width:162px"><div class="t" style="left:4.5px;top:4px;font-size:14px;word-spacing:3.16px;">Stk | Stück</div></div><div class="c" style="left:1229px;width:95px"></div></div>
<div class="a" style="left:0;top:33px;width:1px;height:700px;background:#c4c4c8"></div><div class="a" style="left:1302px;top:34px;width:23px;height:700px;background:#f5f5f6"><svg class="a" style="left:7px;top:9px" width="9" height="5" viewBox="0 0 9 5"><path d="M0 5 L4.5 0.3 L9 5 Z" fill="#7a7a7a"/></svg><div class="a" style="left:6px;top:19px;width:9px;height:11px;background:#d3d3da;border:1px solid #a8a8b0;border-radius:5px"></div></div>
</div>
<div class="a" style="left:24px;top:156px;width:1216px;height:64px;border:5px solid #ed1c24"></div>
</div>
</div>
</body></html>
